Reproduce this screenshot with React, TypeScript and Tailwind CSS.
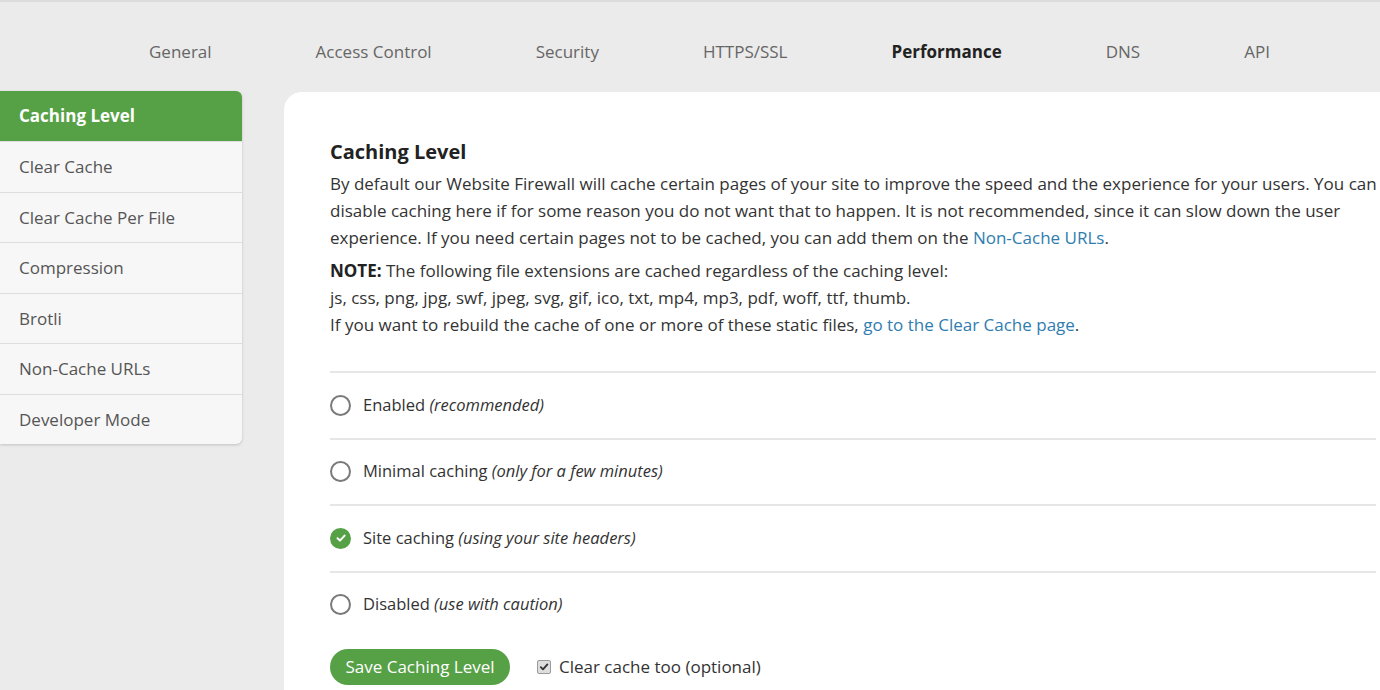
import React from "react";

const tabs = ["General", "Access Control", "Security", "HTTPS/SSL", "Performance", "DNS", "API"];
const side = ["Caching Level", "Clear Cache", "Clear Cache Per File", "Compression", "Brotli", "Non-Cache URLs", "Developer Mode"];

const options: { label: string; note: string; checked?: boolean }[] = [
  { label: "Enabled", note: "(recommended)" },
  { label: "Minimal caching", note: "(only for a few minutes)" },
  { label: "Site caching", note: "(using your site headers)", checked: true },
  { label: "Disabled", note: "(use with caution)" },
];

function Radio({ checked }: { checked?: boolean }) {
  if (checked) {
    return (
      <span className="flex h-[21px] w-[21px] items-center justify-center rounded-full bg-[#56a046]">
        <svg width="12" height="12" viewBox="0 0 12 12" fill="none">
          <path d="M2.5 6.2 L5 8.6 L9.6 3.6" stroke="white" strokeWidth="2" strokeLinecap="round" strokeLinejoin="round" />
        </svg>
      </span>
    );
  }
  return <span className="block h-[21px] w-[21px] rounded-full border-2 border-[#7a7a7a] bg-white" />;
}

export default function App() {
  return (
    <div
      className="relative h-[690px] w-[1380px] overflow-hidden bg-[#ebebeb] text-[#333]"
      style={{ fontFamily: '"Open Sans", "Noto Sans", sans-serif' }}
    >
      <div className="h-[2px] bg-[#dcdcdc]" />
      <nav className="flex h-[89px] items-center gap-[104px] pl-[149px] pt-[10px] text-[17px] text-[#666]">
        {tabs.map((t) => (
          <span key={t} className={t === "Performance" ? "font-bold text-[#222]" : ""}>
            {t}
          </span>
        ))}
      </nav>
      <div className="flex items-start">
        <aside className="w-[242px] shrink-0 overflow-hidden rounded-r-[6px] bg-[#f7f7f7] shadow-[0_1px_3px_rgba(0,0,0,0.18)]">
          {side.map((s, i) => (
            <div
              key={s}
              className={
                i === 0
                  ? "flex h-[50px] items-center bg-[#56a046] pl-[19px] text-[17px] font-bold text-white"
                  : "flex h-[50.5px] items-center border-t border-[#dedede] pl-[19px] text-[17px] text-[#555]"
              }
            >
              {s}
            </div>
          ))}
        </aside>
        <main className="ml-[42px] mt-[1px] h-[620px] w-[1140px] shrink-0 rounded-tl-[18px] bg-white px-[46px] pt-[46px]">
          <h2 className="text-[20px] font-bold leading-[28px] text-[#222]">Caching Level</h2>
          <p className="mt-[4px] whitespace-nowrap text-[17px] leading-[27px]">
            By default our Website Firewall will cache certain pages of your site to improve the speed and the experience for your users. You can
            <br />
            disable caching here if for some reason you do not want that to happen. It is not recommended, since it can slow down the user
            <br />
            experience. If you need certain pages not to be cached, you can add them on the{" "}
            <span className="text-[#2f7db0]">Non-Cache URLs</span>.
          </p>
          <p className="mt-[6px] whitespace-nowrap text-[17px] leading-[27px]">
            <b className="text-[#222]">NOTE:</b> The following file extensions are cached regardless of the caching level:
            <br />
            js, css, png, jpg, swf, jpeg, svg, gif, ico, txt, mp4, mp3, pdf, woff, ttf, thumb.
            <br />
            If you want to rebuild the cache of one or more of these static files,{" "}
            <span className="text-[#2f7db0]">go to the Clear Cache page</span>.
          </p>
          <div className="mt-[33px] w-[1046px]">
            {options.map((o) => (
              <div key={o.label} className="flex h-[66.5px] items-center gap-[12px] border-t-2 border-[#e6e6e6]">
                <Radio checked={o.checked} />
                <span className="text-[16.5px]">
                  {o.label} <i>{o.note}</i>
                </span>
              </div>
            ))}
          </div>
          <div className="mt-[12px] flex items-center">
            <button className="h-[36px] w-[180px] rounded-full bg-[#56a046] text-[17px] text-white">
              Save Caching Level
            </button>
            <span className="ml-[27px] flex h-[14px] w-[14px] items-center justify-center rounded-[2px] border border-[#9a9a9a] bg-[#dedede]">
              <svg width="10" height="10" viewBox="0 0 10 10" fill="none">
                <path d="M1.8 5.2 L4 7.4 L8.4 2.4" stroke="#333" strokeWidth="1.8" strokeLinecap="round" strokeLinejoin="round" />
              </svg>
            </span>
            <span className="ml-[8px] text-[17px]">Clear cache too (optional)</span>
          </div>
        </main>
      </div>
    </div>
  );
}
